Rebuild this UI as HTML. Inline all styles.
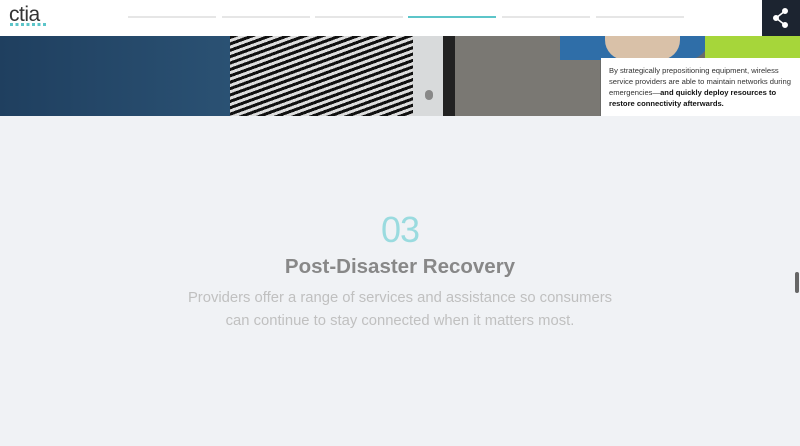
<!DOCTYPE html>
<html><head><meta charset="utf-8"><style>
*{margin:0;padding:0;box-sizing:border-box}
body{width:800px;height:446px;overflow:hidden;background:#f0f2f5;font-family:"Liberation Sans",sans-serif;position:relative}
.hdr{position:absolute;left:0;top:0;width:800px;height:36px;background:#fff}
.logo{position:absolute;left:9px;top:3px;font-size:21px;color:#333;letter-spacing:-0.5px;font-weight:300}
.dots{position:absolute;left:10px;top:23px;width:36px;height:3px;background:repeating-linear-gradient(90deg,#5cc5c9 0 3px,transparent 3px 5.5px)}
.nav{position:absolute;top:16px;height:2px;width:88px;background:#e6e6e6}
.share{position:absolute;left:762px;top:0;width:38px;height:36px;background:#1c2430}
.band{position:absolute;left:0;top:36px;width:800px;height:80px;overflow:hidden;background:#6b6b68}
.box{position:absolute;left:601px;top:58px;width:199px;height:58px;background:#fff;padding:7px 8px;font-size:7.6px;line-height:11px;color:#333;font-family:"Liberation Sans Narrow","Liberation Sans",sans-serif}
.num{position:absolute;left:0;width:800px;top:209px;text-align:center;font-size:36px;color:#9adbdf;font-weight:300;letter-spacing:-1px}
h1{position:absolute;left:0;width:800px;top:255px;text-align:center;font-size:20.5px;color:#888;font-weight:bold}
p{position:absolute;left:0;width:800px;top:287px;text-align:center;font-size:14.8px;line-height:23px;color:#c0c0c0}
</style></head><body>
<div class="hdr">
<div class="logo">ctia</div><div class="dots"></div>
<div class="nav" style="left:128px"></div>
<div class="nav" style="left:222px"></div>
<div class="nav" style="left:315px"></div>
<div class="nav" style="left:408px;background:#5cc5c9"></div>
<div class="nav" style="left:502px"></div>
<div class="nav" style="left:596px"></div>
<div class="share"><svg width="38" height="36" viewBox="0 0 38 36"><g fill="#fff" stroke="#fff" stroke-width="1.6"><circle cx="23" cy="11" r="2.2"/><circle cx="14" cy="18" r="2.2"/><circle cx="23" cy="25" r="2.2"/><path d="M23 11L14 18L23 25" fill="none"/></g></svg></div>
</div>
<div class="band">
<div style="position:absolute;left:0;top:0;width:240px;height:80px;background:linear-gradient(90deg,#1f3f5f,#2b5274)"></div>
<div style="position:absolute;left:230px;top:0;width:183px;height:80px;background:repeating-linear-gradient(160deg,#111 0 3px,#ddd 3px 6px)"></div>
<div style="position:absolute;left:413px;top:0;width:30px;height:80px;background:#d8dadb"></div>
<div style="position:absolute;left:443px;top:0;width:12px;height:80px;background:#222"></div>
<div style="position:absolute;left:455px;top:0;width:145px;height:80px;background:#7a7873"></div>
<div style="position:absolute;left:560px;top:0;width:150px;height:24px;background:#2f6ea8;border-radius:0 0 30px 0"></div>
<div style="position:absolute;left:605px;top:0;width:75px;height:24px;background:#d9c1a8;border-radius:0 0 20px 20px"></div>
<div style="position:absolute;left:705px;top:0;width:95px;height:24px;background:#a6d63a"></div>
<div style="position:absolute;left:425px;top:54px;width:8px;height:10px;border-radius:4px;background:#888"></div>
</div>
<div class="box">By strategically prepositioning equipment, wireless service providers are able to maintain networks during emergencies—<b style="color:#111">and quickly deploy resources to restore connectivity afterwards.</b></div>
<div class="num">03</div>
<h1>Post-Disaster Recovery</h1>
<p>Providers offer a range of services and assistance so consumers<br>can continue to stay connected when it matters most.</p>
<div style="position:absolute;left:795px;top:272px;width:4px;height:21px;background:#666;border-radius:2px"></div>
</body></html>
